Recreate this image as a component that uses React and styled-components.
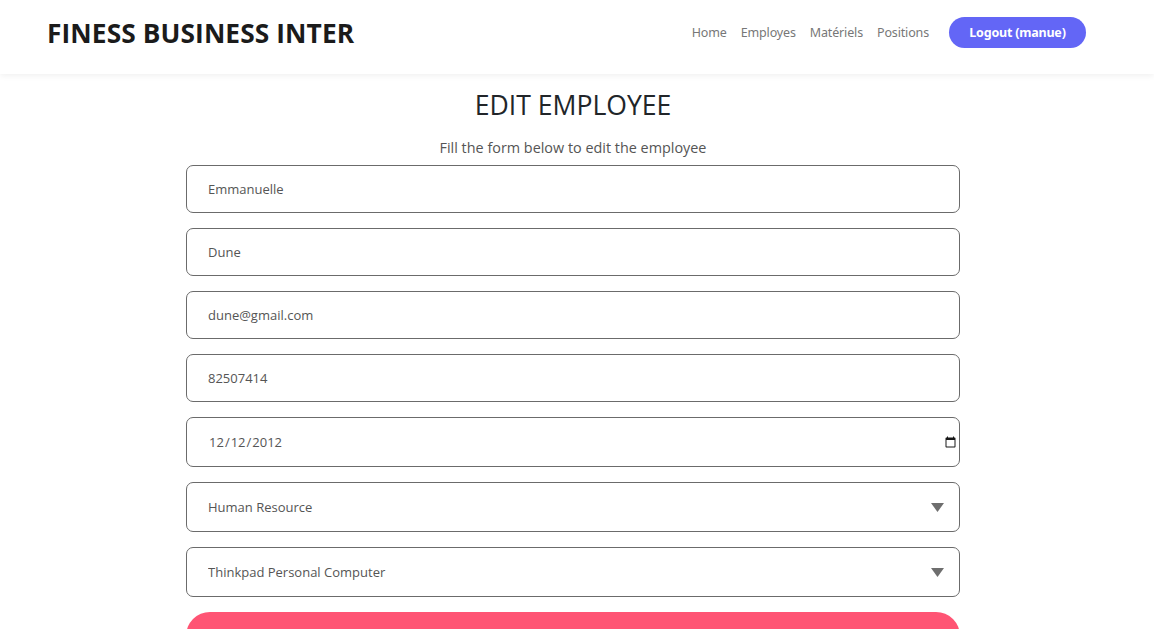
import React from "react";
import styled, { createGlobalStyle } from "styled-components";

const Global = createGlobalStyle`
  html, body { margin: 0; padding: 0; background: #fff; }
  body { font-family: "Open Sans", "Noto Sans", sans-serif; color: #212529; overflow: hidden; }
  * { box-sizing: border-box; }
`;

const Header = styled.header`
  height: 74px;
  display: flex;
  align-items: center;
  justify-content: space-between;
  padding: 0 68px 0 47px;
  background: #fff;
  box-shadow: 0 2px 6px rgba(0, 0, 0, 0.06);
  position: relative;
  z-index: 1;
`;

const Brand = styled.h1`
  margin: 0;
  font-family: "Open Sans", sans-serif;
  font-weight: 700;
  font-size: 26.3px;
  color: #1b1b1b;
  letter-spacing: 0.1px;
  transform: translateY(-4px);
`;

const Nav = styled.nav`
  display: flex;
  align-items: center;
  transform: translateY(-5px);
`;

const NavLink = styled.a`
  font-family: "Noto Sans", "Open Sans", sans-serif;
  font-size: 12.5px;
  color: #777;
  text-decoration: none;
  margin-right: 14px;
  letter-spacing: -0.15px;
`;

const LogoutButton = styled.button`
  margin-left: 6px;
  height: 31px;
  width: 137px;
  border: none;
  border-radius: 16px;
  background: #6366f6;
  color: #fff;
  font-family: "Noto Sans", "Open Sans", sans-serif;
  font-weight: 700;
  font-size: 12.5px;
  letter-spacing: -0.2px;
`;

const Page = styled.div`
  padding-right: 8px;
`;

const Main = styled.main`
  width: 774px;
  margin: 0 auto;
  padding-top: 13px;
  display: flex;
  flex-direction: column;
  align-items: stretch;
`;

const Title = styled.h2`
  margin: 0;
  text-align: center;
  font-weight: 400;
  font-size: 26.6px;
  line-height: 36px;
  color: #212529;
`;

const Subtitle = styled.p`
  margin: 15px 0 8px;
  text-align: center;
  font-size: 14.4px;
  color: #555;
`;

const Form = styled.form`
  display: flex;
  flex-direction: column;
  gap: 15px;
`;

const Field = styled.input`
  width: 100%;
  height: ${(p) => (p.$tall ? "50px" : "48px")};
  border: 1px solid #6b6b6b;
  border-radius: 7px;
  padding: 0 ${(p) => (p.$tall ? "0px" : "10px")} 0 21px;
  font-family: "Open Sans", sans-serif;
  font-size: 13px;
  color: #555;
  background: #fff;
  outline: none;
  &::-webkit-calendar-picker-indicator { opacity: 0.9; }
`;

const SelectWrap = styled.div`
  position: relative;
`;

const Select = styled.select`
  width: 100%;
  height: 50px;
  border: 1px solid #6b6b6b;
  border-radius: 7px;
  padding: 0 40px 0 21px;
  font-family: "Open Sans", sans-serif;
  font-size: 13px;
  color: #555;
  background: #fff;
  appearance: none;
  -webkit-appearance: none;
  outline: none;
`;

const Caret = styled.svg`
  position: absolute;
  right: 16px;
  top: 21px;
  pointer-events: none;
`;

const Submit = styled.button`
  height: 60px;
  border: none;
  border-radius: 24px;
  background: #ff5474;
  color: #fff;
  font-family: "Open Sans", sans-serif;
  font-size: 16px;
`;

const Dropdown = ({ value, options }) => (
  <SelectWrap>
    <Select defaultValue={value}>
      {options.map((o) => (
        <option key={o}>{o}</option>
      ))}
    </Select>
    <Caret width="13" height="9" viewBox="0 0 13 9">
      <path d="M0 0 H13 L6.5 9 Z" fill="#6e6e6e" />
    </Caret>
  </SelectWrap>
);

export default function App() {
  return (
    <>
      <Global />
      <Header>
        <Brand>FINESS BUSINESS INTER</Brand>
        <Nav>
          <NavLink href="#">Home</NavLink>
          <NavLink href="#">Employes</NavLink>
          <NavLink href="#">Matériels</NavLink>
          <NavLink href="#">Positions</NavLink>
          <LogoutButton>Logout (manue)</LogoutButton>
        </Nav>
      </Header>
      <Page>
        <Main>
          <Title>EDIT EMPLOYEE</Title>
          <Subtitle>Fill the form below to edit the employee</Subtitle>
          <Form onSubmit={(e) => e.preventDefault()}>
            <Field defaultValue="Emmanuelle" />
            <Field defaultValue="Dune" />
            <Field defaultValue="dune@gmail.com" />
            <Field defaultValue="82507414" />
            <Field $tall type="date" defaultValue="2012-12-12" />
            <Dropdown value="Human Resource" options={["Human Resource", "Marketing", "Finance"]} />
            <Dropdown value="Thinkpad Personal Computer" options={["Thinkpad Personal Computer", "MacBook Pro"]} />
            <Submit type="submit">Update</Submit>
          </Form>
        </Main>
      </Page>
    </>
  );
}
